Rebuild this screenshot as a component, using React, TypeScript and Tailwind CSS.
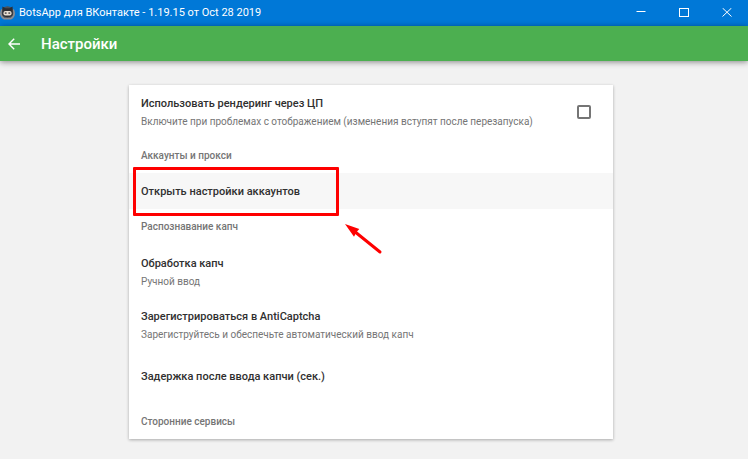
import React from 'react';

interface SettingTextProps {
  title: string;
  hint?: string;
}

const SettingText: React.FC<SettingTextProps> = ({ title, hint }) => (
  <span className="block min-w-0">
    <span className="block text-[11px] font-medium leading-5 text-[#303030]">{title}</span>
    {hint && <span className="block text-[10px] leading-4 text-[#757575]">{hint}</span>}
  </span>
);

const SectionTitle: React.FC<{ children: React.ReactNode }> = ({ children }) => (
  <h2 className="px-3 text-[10px] font-medium leading-[35px] text-[#757575]">{children}</h2>
);

const BotLogo: React.FC = () => (
  <svg className="h-4 w-[15px] shrink-0" viewBox="0 0 15 16" aria-hidden="true">
    <circle cx="7.5" cy="7.5" r="6.2" fill="#4c5158" />
    <path d="M1.8 4.5 C0.2 8 0.8 11.5 4 13.6 H11 C14.2 11.5 14.8 8 13.2 4.5" fill="none" stroke="#8f8c8e" strokeWidth="1.6" />
    <path d="M2.4 1.6 L5.6 3.2 H9.4 L12.6 1.6 V10 Q7.5 14.5 2.4 10 Z" fill="#2c2d32" />
    <rect x="3.4" y="6" width="8.2" height="4.6" rx="2" fill="#e9dfd3" />
    <rect x="4.8" y="7.2" width="1.8" height="1.8" fill="#6a6563" />
    <rect x="8.4" y="7.2" width="1.8" height="1.8" fill="#6a6563" />
  </svg>
);

const TitleBar: React.FC = () => (
  <div className="flex h-[26px] items-center bg-[#0078d7] text-white">
    <BotLogo />
    <span className="ml-1 flex-1 truncate text-[11px] leading-4">
      BotsApp для ВКонтакте - 1.19.15 от Oct 28 2019
    </span>
    <button type="button" aria-label="Свернуть" className="flex h-full w-[43px] items-center justify-center">
      <svg className="h-[10px] w-[10px]" viewBox="0 0 10 10" stroke="currentColor">
        <path d="M0.5 3.5 H9.5" />
      </svg>
    </button>
    <button type="button" aria-label="Развернуть" className="flex h-full w-[43px] items-center justify-center">
      <svg className="h-[10px] w-[10px]" viewBox="0 0 10 10" fill="none" stroke="currentColor">
        <rect x="0.5" y="0.5" width="9" height="8" />
      </svg>
    </button>
    <button type="button" aria-label="Закрыть" className="flex h-full w-[43px] items-center justify-center">
      <svg className="h-[10px] w-[10px]" viewBox="0 0 10 10" stroke="currentColor">
        <path d="M0.5 0 L9.5 8.5 M9.5 0 L0.5 8.5" />
      </svg>
    </button>
  </div>
);

const Toolbar: React.FC = () => (
  <header className="flex h-[35px] items-center bg-[#4caf50] pl-2 text-white shadow-[0_1px_6px_rgba(0,0,0,0.45)]">
    <button type="button" aria-label="Назад">
      <svg className="h-3 w-3" viewBox="0 0 12 12" fill="none" stroke="currentColor" strokeWidth="1.4">
        <path d="M12 6 H1 M6.2 0.8 L1 6 L6.2 11.2" />
      </svg>
    </button>
    <h1 className="ml-[21px] text-[15px] font-medium leading-5">Настройки</h1>
  </header>
);

const Highlight: React.FC = () => (
  <>
    <span className="pointer-events-none absolute -top-[6px] left-1 h-[49px] w-[206px] rounded-[1px] border-3 border-[#fe0000]" />
    <svg
      className="pointer-events-none absolute left-[215px] top-[50px] h-8 w-10"
      viewBox="0 0 40 32"
      fill="#fe0000"
      aria-hidden="true"
    >
      <path d="M1 1 L15.3 6 L12.6 9 L10 13.7 Z" />
      <path d="M10 8 L36 29" stroke="#fe0000" strokeWidth="3" strokeLinecap="round" />
    </svg>
  </>
);

const App: React.FC = () => {
  return (
    <div className="flex min-h-screen flex-col bg-[#f2f2f2] font-[Roboto,sans-serif]">
      <TitleBar />
      <Toolbar />
      <main className="flex-1 pb-5 pr-[6px] pt-6">
        <div className="mx-auto w-full max-w-[484px] bg-white shadow-[0_1px_3px_rgba(0,0,0,0.3)]">
          <label className="flex items-center justify-between pb-2 pl-3 pr-[22px] pt-[9px]">
            <SettingText
              title="Использовать рендеринг через ЦП"
              hint="Включите при проблемах с отображением (изменения вступят после перезапуска)"
            />
            <input
              type="checkbox"
              className="h-[14px] w-[14px] shrink-0 appearance-none rounded-[2px] border-2 border-[#757575] checked:bg-[#4caf50]"
            />
          </label>

          <SectionTitle>Аккаунты и прокси</SectionTitle>
          <div className="relative">
            <button type="button" className="block w-full bg-[#f7f7f7] px-3 pb-[7px] pt-[9px] text-left">
              <SettingText title="Открыть настройки аккаунтов" />
            </button>
            <Highlight />
          </div>

          <SectionTitle>Распознавание капч</SectionTitle>
          <button type="button" className="block w-full px-3 pb-[7px] pt-[10px] text-left">
            <SettingText title="Обработка капч" hint="Ручной ввод" />
          </button>
          <button type="button" className="block w-full px-3 pb-[7px] pt-[10px] text-left">
            <SettingText
              title="Зарегистрироваться в AntiCaptcha"
              hint="Зарегиструйтесь и обеспечьте автоматический ввод капч"
            />
          </button>
          <button type="button" className="block w-full px-3 py-[17px] text-left">
            <SettingText title="Задержка после ввода капчи (сек.)" />
          </button>

          <SectionTitle>Сторонние сервисы</SectionTitle>
        </div>
      </main>
    </div>
  );
};

export default App;
